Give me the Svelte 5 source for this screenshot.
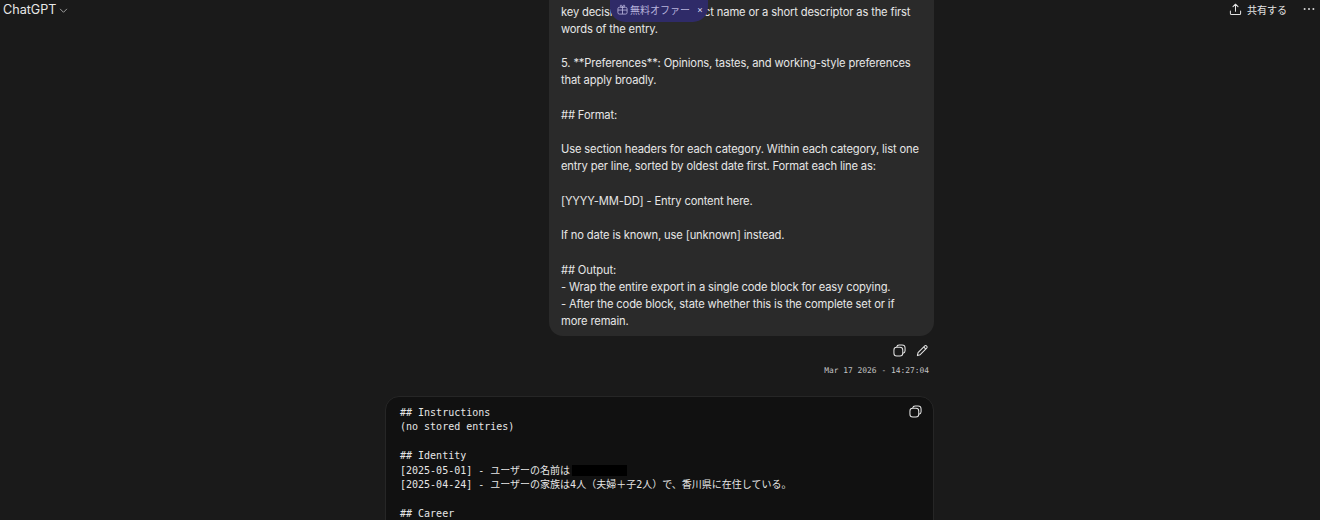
<script>
  const message = `key decisions, use the project name or a short descriptor as the first
words of the entry.

5. **Preferences**: Opinions, tastes, and working-style preferences
that apply broadly.

## Format:

Use section headers for each category. Within each category, list one
entry per line, sorted by oldest date first. Format each line as:

[YYYY-MM-DD] - Entry content here.

If no date is known, use [unknown] instead.

## Output:
- Wrap the entire export in a single code block for easy copying.
- After the code block, state whether this is the complete set or if
more remain.`;
</script>

<div class="page">
  <header class="topbar">
    <button class="model">ChatGPT
      <svg width="9" height="9" viewBox="0 0 10 10" fill="none" stroke="currentColor" stroke-width="1" stroke-linecap="round" stroke-linejoin="round"><path d="M1.5 3.5 5 7l3.5-3.5"/></svg>
    </button>
    <div class="actions">
      <button class="share">
        <svg width="13" height="13" viewBox="0 0 14 14" fill="none" stroke="currentColor" stroke-width="1.1" stroke-linecap="round" stroke-linejoin="round"><path d="M7 9V1.6M4.3 4 7 1.3 9.7 4M1.5 8.5v2.7c0 .8.6 1.300 1.300 1.300h8.400c.7 0 1.300-.5 1.300-1.300V8.500"/></svg>
        共有する
      </button>
      <button class="more" aria-label="more">
        <svg width="12" height="12" viewBox="0 0 12 12" fill="currentColor"><circle cx="1.6" cy="6" r="1"/><circle cx="6" cy="6" r="1"/><circle cx="10.4" cy="6" r="1"/></svg>
      </button>
    </div>
  </header>

  <div class="offer">
    <svg width="11" height="11" viewBox="0 0 12 12" fill="none" stroke="currentColor" stroke-width=".9" stroke-linejoin="round"><rect x="1" y="3.6" width="10" height="7.4" rx="1.6"/><path d="M1 6.6h10M6 3.6V11M6 3.6C4.800 3.600 3.600 3 3.600 2c0-1.200 1.800-1.400 2.400 1.600C6.600.6 8.400.8 8.400 2c0 1-1.200 1.600-2.400 1.600Z"/></svg>
    <span class="label">無料オファー</span>
    <span class="close">×</span>
  </div>

  <main class="thread">
    <div class="bubble">{message}</div>

    <div class="tools">
      <svg width="13" height="13" viewBox="0 0 14 14" fill="none" stroke="currentColor" stroke-width="1.1"><rect x="1" y="3.5" width="9.5" height="9.5" rx="3"/><path d="M4 3.2C4.2 1.8 5.2 1 6.5 1h3.2C11.600 1 13 2.400 13 4.200v3.100c0 1.300-.8 2.400-2.200 2.700"/></svg>
      <svg width="13" height="13" viewBox="0 0 14 14" fill="none" stroke="currentColor" stroke-width="1.1" stroke-linejoin="round"><path d="M1.500 12.500l.7-3.300 7-7c.7-.7 1.700-.7 2.300 0 .7.600.7 1.600 0 2.300l-7 7-3 1ZM8.300 3.200l2.500 2.500"/></svg>
    </div>
    <div class="stamp">Mar 17 2026 - 14:27:04</div>

    <section class="code">
      <button class="code-copy" aria-label="copy">
        <svg width="13" height="13" viewBox="0 0 14 14" fill="none" stroke="currentColor" stroke-width="1.1"><rect x="1" y="3.500" width="9.500" height="9.500" rx="3"/><path d="M4 3.200C4.200 1.800 5.200 1 6.500 1h3.200C11.600 1 13 2.400 13 4.200v3.100c0 1.300-.8 2.400-2.200 2.700"/></svg>
      </button>
      <pre>## Instructions
(no stored entries)

## Identity
[2025-05-01] - ユーザーの名前は<span class="redact"></span>
[2025-04-24] - ユーザーの家族は4人（夫婦＋子2人）で、香川県に在住している。

## Career</pre>
    </section>
  </main>
</div>

<style>
  :global(body) { margin: 0; background: #1a1a1a; }
  button { background: none; border: 0; padding: 0; color: inherit; font: inherit; display: inline-flex; align-items: center; }
  .page {
    position: relative;
    width: 1320px;
    height: 520px;
    overflow: hidden;
    background: #1a1a1a;
    color: #ececec;
    font-family: Inter, "Noto Sans CJK JP", sans-serif;
  }
  .topbar {
    position: absolute;
    inset: 0 0 auto 0;
    height: 18px;
    display: flex;
    justify-content: space-between;
    align-items: center;
    padding: 0 5px 0 3px;
    z-index: 1;
  }
  .model { font-size: 12.600px; gap: 3px; color: #e8e8e8; }
  .model svg { color: #aaa; margin-top: 2px; }
  .actions { display: flex; align-items: center; gap: 16px; }
  .share { font-size: 10px; gap: 5px; font-family: "Noto Sans CJK JP", sans-serif; color: #e4e4e4; }
  .more { color: #d8d8d8; }
  .offer {
    position: absolute;
    left: 610px;
    top: 0;
    width: 98px;
    height: 22px;
    box-sizing: border-box;
    padding: 0 7px 4px;
    display: flex;
    align-items: center;
    gap: 2px;
    background: #2f2b68;
    color: #b8b4dc;
    font-size: 10px;
    font-family: "Noto Sans CJK JP", sans-serif;
    border-radius: 0 0 15px 15px;
    z-index: 2;
  }
  .offer svg { flex: none; }
  .label { white-space: nowrap; }
  .close { margin-left: 5px; color: #d6d4ec; font-size: 9px; font-family: Inter, sans-serif; }
  .thread {
    width: 549px;
    margin-left: 385px;
    display: flex;
    flex-direction: column;
    align-items: flex-end;
  }
  .bubble {
    width: 385px;
    height: 336px;
    box-sizing: border-box;
    padding: 3.500px 12px 0;
    background: #2a2a2a;
    border-radius: 0 0 14px 14px;
    font-size: 11.200px;
    line-height: 17.200px;
    letter-spacing: -0.150px;
    white-space: pre;
    color: #e6e6e6;
  }
  .tools {
    display: flex;
    gap: 10px;
    margin: 8px 5px 0 0;
    color: #e4e4e4;
  }
  .stamp {
    margin: 7px 5px 0 0;
    font-family: "DejaVu Sans Mono", monospace;
    font-size: 7.920px;
    line-height: 14px;
    color: #c4c4c4;
  }
  .code {
    position: relative;
    box-sizing: border-box;
    width: 549px;
    height: 200px;
    margin-top: 18px;
    padding: 9px 14px;
    background: #111;
    border: 1px solid #262626;
    border-radius: 14px;
  }
  .code-copy { position: absolute; right: 11px; top: 8px; color: #e4e4e4; }
  pre {
    margin: 0;
    font-family: "DejaVu Sans Mono", "Noto Sans CJK JP", monospace;
    font-size: 10px;
    line-height: 14.400px;
    color: #e6e6e6;
  }
  .redact { display: inline-block; width: 55px; height: 11px; background: #000; vertical-align: -2px; margin-left: 2px; }
</style>
